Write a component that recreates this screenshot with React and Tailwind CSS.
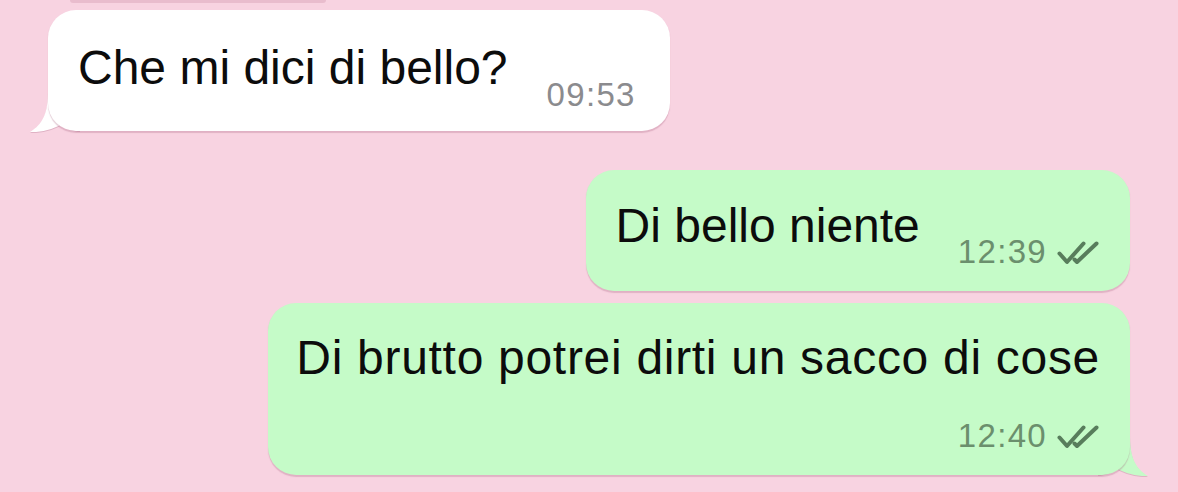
import React from "react";

function Ticks() {
  return (
    <svg width="44" height="24" viewBox="0 0 44 24" fill="none" className="ml-[9px] mb-[3px]">
      <path d="M3.5 12.5 L11 21 L27.5 2.5" stroke="#587d5c" strokeWidth="4" strokeLinecap="round" strokeLinejoin="round" />
      <path d="M18.5 18.5 L21 21 L40.5 2.5" stroke="#587d5c" strokeWidth="4" strokeLinecap="round" strokeLinejoin="round" />
    </svg>
  );
}

function TailLeft() {
  return (
    <svg
      width="50"
      height="42"
      viewBox="0 0 50 42"
      className="absolute left-[-18px] bottom-[-2px] drop-shadow-[0_1px_0.5px_rgba(150,80,110,0.25)]"
    >
      <path d="M18 0 C18 22 13 33 0 41 C10 41.5 22 39 32 33 C38 38 44 40 50 40 L50 0 Z" fill="#ffffff" />
    </svg>
  );
}

function TailRight() {
  return (
    <svg
      width="50"
      height="42"
      viewBox="0 0 50 42"
      className="absolute right-[-18px] bottom-[-2px] drop-shadow-[0_1px_0.5px_rgba(150,80,110,0.25)]"
    >
      <path d="M32 0 C32 22 37 33 50 41 C40 41.5 28 39 18 33 C12 38 6 40 0 40 L0 0 Z" fill="#c5fbc8" />
    </svg>
  );
}

export default function App() {
  return (
    <div className="w-[1178px] h-[492px] overflow-hidden bg-[#f8d3e1] flex flex-col font-['Liberation_Sans',Arial,sans-serif] text-[#0c0c0c]">
      {/* edge of an earlier message */}
      <div className="ml-[70px] w-[256px] h-[3px] rounded-b-full bg-[#e9bccd]" />

      {/* incoming */}
      <div className="mt-[7px] ml-[48px] self-start relative">
        <div className="relative z-10 bg-white rounded-[28px] pl-[30px] pr-[34px] pt-[34px] pb-[20px] flex items-start shadow-[0_1.5px_1px_rgba(170,100,130,0.3)]">
          <span className="text-[48px] leading-[48px]">Che mi dici di bello?</span>
          <span className="ml-[39px] mt-[34px] text-[33px] leading-[33px] text-[#8b8b8e] tracking-[0.04em]">09:53</span>
        </div>
        <TailLeft />
      </div>

      {/* outgoing 1 */}
      <div className="mt-[39px] mr-[48px] self-end">
        <div className="bg-[#c5fbc8] rounded-[28px] pl-[30px] pr-[30px] pt-[32px] pb-[23px] flex items-start shadow-[0_1.5px_1px_rgba(170,100,130,0.3)]">
          <span className="text-[48px] leading-[48px]">Di bello niente</span>
          <div className="ml-[38px] mt-[33px] flex items-end">
            <span className="text-[33px] leading-[33px] text-[#6b8f6d] tracking-[0.04em]">12:39</span>
            <Ticks />
          </div>
        </div>
      </div>

      {/* outgoing 2 */}
      <div className="mt-[12px] mr-[48px] self-end relative">
        <div className="relative z-10 bg-[#c5fbc8] rounded-[28px] pl-[28px] pr-[30px] pt-[31px] pb-[23px] flex flex-col shadow-[0_1.5px_1px_rgba(170,100,130,0.3)]">
          <span className="text-[48px] leading-[48px] tracking-[0.7px]">Di brutto potrei dirti un sacco di cose</span>
          <div className="mt-[37px] self-end flex items-end">
            <span className="text-[33px] leading-[33px] text-[#6b8f6d] tracking-[0.04em]">12:40</span>
            <Ticks />
          </div>
        </div>
        <TailRight />
      </div>
    </div>
  );
}
